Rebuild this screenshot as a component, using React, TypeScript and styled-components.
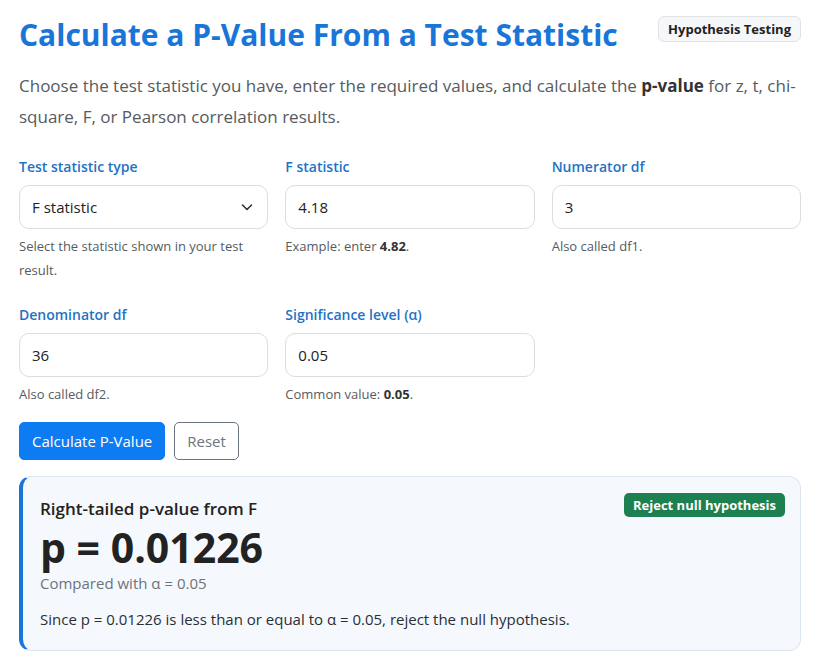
import React, { useState } from 'react';
import styled, { createGlobalStyle } from 'styled-components';

const GlobalStyle = createGlobalStyle`
  body {
    margin: 0;
    background: #ffffff;
    font-family: "Open Sans", "Noto Sans", sans-serif;
    color: #212529;
  }
`;

const Page = styled.div`
  padding: 15px 16px 10px 19px;
`;

const Header = styled.div`
  display: flex;
  justify-content: space-between;
  align-items: flex-start;
`;

const Title = styled.h1`
  margin: 0;
  font-size: 30px;
  font-weight: 700;
  color: #1a75d9;
  line-height: 1.3;
`;

const Tag = styled.span`
  margin-top: 1px;
  padding: 3px 9px;
  font-size: 13px;
  font-weight: 700;
  color: #222;
  background: #f6f7f9;
  border: 1px solid #dfe2e6;
  border-radius: 6px;
`;

const Intro = styled.p`
  margin: 16px 0 25px;
  font-size: 17px;
  line-height: 31px;
  color: #555b61;
  b { color: #333; }
`;

const FieldGrid = styled.div`
  display: grid;
  grid-template-columns: repeat(3, 1fr);
  column-gap: 17px;
  row-gap: 23px;
`;

const Field = styled.div`
  display: flex;
  flex-direction: column;
`;

const Label = styled.label`
  font-size: 14px;
  font-weight: 600;
  color: #1f72c4;
  margin-bottom: 9px;
`;

const boxStyles = `
  height: 44px;
  box-sizing: border-box;
  padding: 0 12px;
  font-family: inherit;
  font-size: 15px;
  color: #222;
  background: #fff;
  border: 1px solid #dadde1;
  border-radius: 10px;
  outline: none;
`;

const Input = styled.input`
  ${boxStyles}
`;

const SelectWrap = styled.div`
  position: relative;
`;

const Select = styled.select`
  ${boxStyles}
  width: 100%;
  appearance: none;
`;

const Chevron = styled.svg`
  position: absolute;
  right: 15px;
  top: 17px;
  pointer-events: none;
`;

const Help = styled.div`
  margin-top: 5px;
  font-size: 13px;
  line-height: 24px;
  color: #555b61;
  b { color: #333; }
`;

const Actions = styled.div`
  display: flex;
  gap: 9px;
  margin-top: 16px;
`;

const Button = styled.button<{ $primary?: boolean }>`
  height: 38px;
  padding: 0 12px;
  font-family: inherit;
  font-size: 15px;
  border-radius: 5px;
  cursor: pointer;
  color: ${p => (p.$primary ? '#fff' : '#6c757d')};
  background: ${p => (p.$primary ? '#0d7cf2' : '#fff')};
  border: 1px solid ${p => (p.$primary ? '#0d7cf2' : '#6c757d')};
`;

const Result = styled.section`
  margin-top: 16px;
  padding: 16px 15px 21px 17px;
  background: #f5f9fd;
  border: 1px solid #dde5ee;
  border-left: 4px solid #1a75d9;
  border-radius: 12px;
`;

const ResultHead = styled.div`
  display: flex;
  justify-content: space-between;
  align-items: flex-start;
`;

const ResultTitle = styled.div`
  margin-top: 4px;
  font-size: 17px;
  font-weight: 600;
  color: #222;
`;

const Verdict = styled.span`
  padding: 3px 9px;
  font-size: 13px;
  font-weight: 700;
  color: #fff;
  background: #1d8050;
  border-radius: 5px;
`;

const PValue = styled.div`
  margin-top: 5px;
  font-size: 41px;
  font-weight: 700;
  line-height: 1.1;
  color: #222;
`;

const Compared = styled.div`
  margin-top: 3px;
  font-size: 15px;
  color: #6c737a;
`;

const Summary = styled.p`
  margin: 16px 0 0;
  font-size: 15px;
  color: #2a2f34;
`;

export default function App() {
  const [stat, setStat] = useState('F statistic');
  const [f, setF] = useState('4.18');
  const [df1, setDf1] = useState('3');
  const [df2, setDf2] = useState('36');
  const [alpha, setAlpha] = useState('0.05');

  return (
    <>
      <GlobalStyle />
      <Page>
        <Header>
          <Title>Calculate a P-Value From a Test Statistic</Title>
          <Tag>Hypothesis Testing</Tag>
        </Header>
        <Intro>
          Choose the test statistic you have, enter the required values, and calculate the <b>p-value</b> for z, t,
          chi-square, F, or Pearson correlation results.
        </Intro>

        <FieldGrid>
          <Field>
            <Label>Test statistic type</Label>
            <SelectWrap>
              <Select value={stat} onChange={e => setStat(e.target.value)}>
                <option>z statistic</option>
                <option>t statistic</option>
                <option>Chi-square statistic</option>
                <option>F statistic</option>
                <option>Pearson correlation (r)</option>
              </Select>
              <Chevron width="12" height="10" viewBox="0 0 12 10">
                <path d="M1.5 3 L6 7.5 L10.5 3" fill="none" stroke="#333" strokeWidth="1.6" strokeLinecap="round" strokeLinejoin="round" />
              </Chevron>
            </SelectWrap>
            <Help>Select the statistic shown in your test result.</Help>
          </Field>
          <Field>
            <Label>F statistic</Label>
            <Input value={f} onChange={e => setF(e.target.value)} />
            <Help>Example: enter <b>4.82</b>.</Help>
          </Field>
          <Field>
            <Label>Numerator df</Label>
            <Input value={df1} onChange={e => setDf1(e.target.value)} />
            <Help>Also called df1.</Help>
          </Field>
          <Field>
            <Label>Denominator df</Label>
            <Input value={df2} onChange={e => setDf2(e.target.value)} />
            <Help>Also called df2.</Help>
          </Field>
          <Field>
            <Label>Significance level (α)</Label>
            <Input value={alpha} onChange={e => setAlpha(e.target.value)} />
            <Help>Common value: <b>0.05</b>.</Help>
          </Field>
        </FieldGrid>

        <Actions>
          <Button $primary>Calculate P-Value</Button>
          <Button>Reset</Button>
        </Actions>

        <Result>
          <ResultHead>
            <ResultTitle>Right-tailed p-value from F</ResultTitle>
            <Verdict>Reject null hypothesis</Verdict>
          </ResultHead>
          <PValue>p = 0.01226</PValue>
          <Compared>Compared with α = 0.05</Compared>
          <Summary>Since p = 0.01226 is less than or equal to α = 0.05, reject the null hypothesis.</Summary>
        </Result>
      </Page>
    </>
  );
}
